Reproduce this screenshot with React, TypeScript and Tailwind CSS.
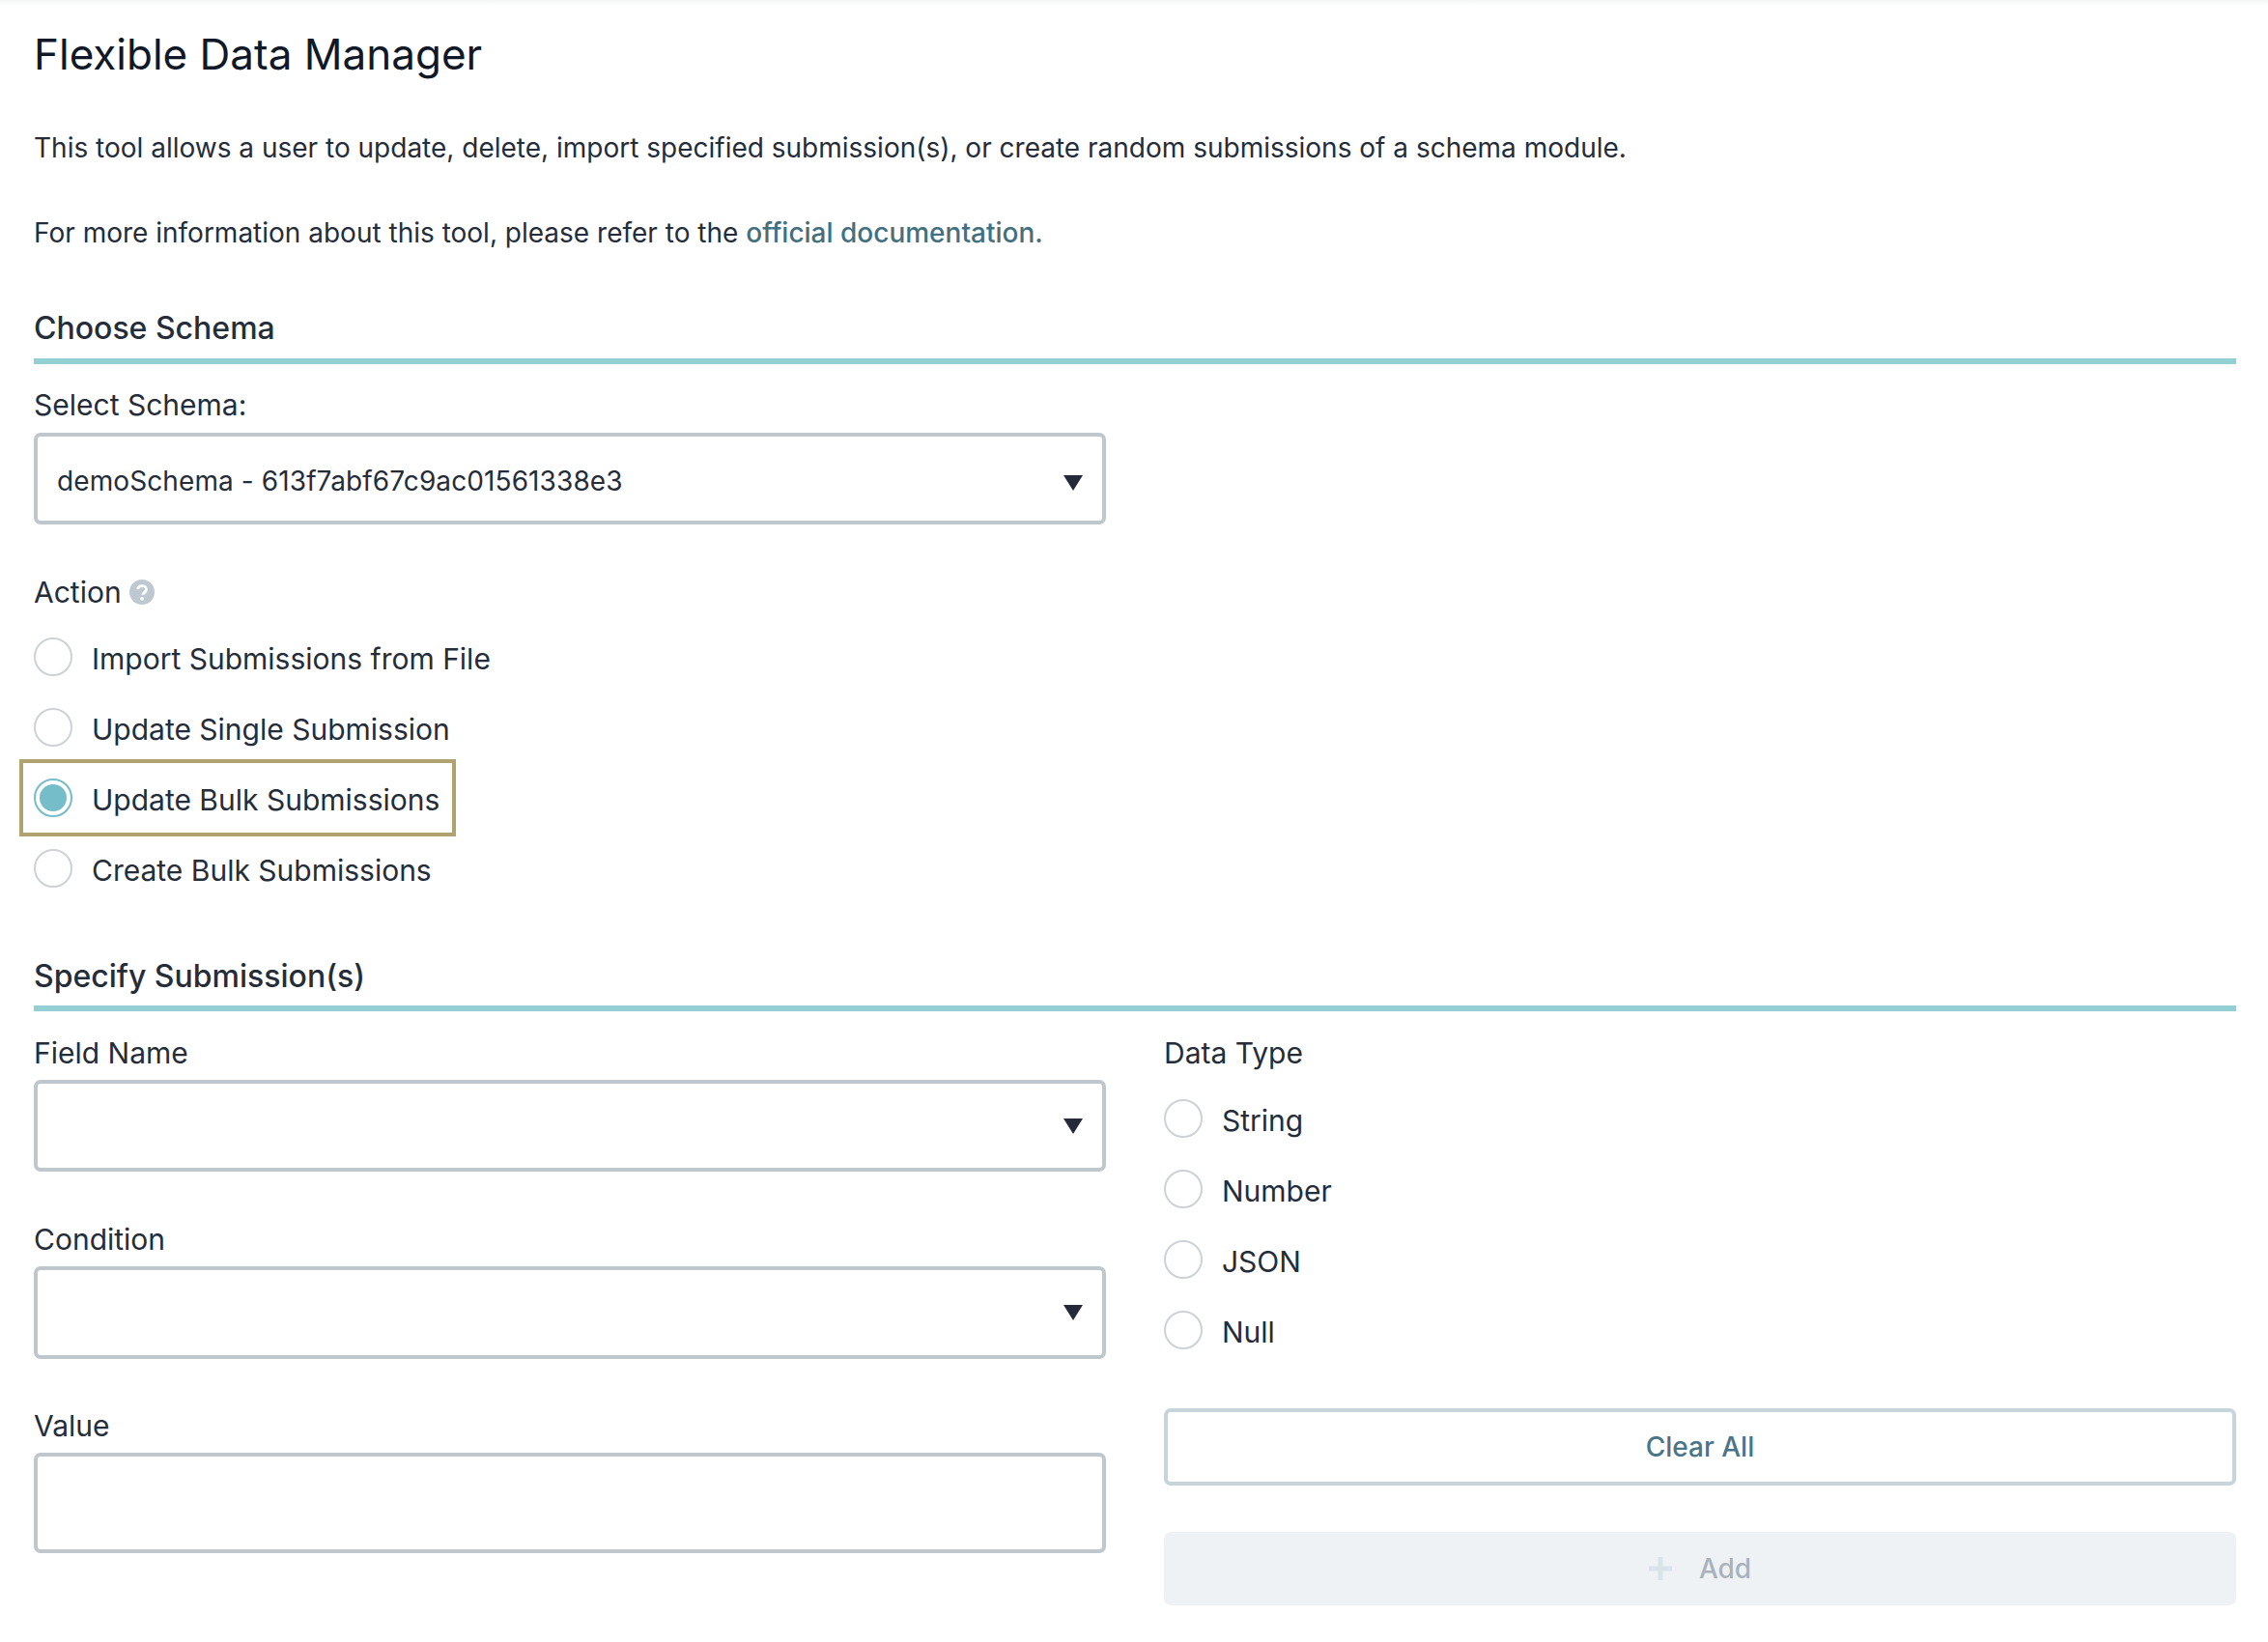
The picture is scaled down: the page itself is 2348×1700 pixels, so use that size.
const font = "[font-family:Inter,'Liberation_Sans',sans-serif]";

function Radio({ label, checked = false }: { label: string; checked?: boolean }) {
  return (
    <div className="relative flex w-fit items-center gap-5">
      {checked ? (
        <span className="flex h-10 w-10 items-center justify-center rounded-full border-[2px] border-[#74bdc9] bg-white">
          <span className="h-7 w-7 rounded-full bg-[#74bdc9]" />
        </span>
      ) : (
        <span className="h-10 w-10 rounded-full border-[2px] border-[#cdd2d6] bg-white" />
      )}
      <span className="h-10 pt-[2px] text-[30px] leading-10 text-[#252d3a]">{label}</span>
      {checked && (
        <span className="absolute -top-5 -right-[17px] -bottom-5 -left-[15px] border-4 border-[#b0a36f]" />
      )}
    </div>
  );
}

function Arrow({ cls }: { cls: string }) {
  return (
    <svg width="20" height="16" viewBox="0 0 20 16" className={`absolute right-[20px] ${cls}`}>
      <path d="M0 0H20L10 16Z" fill="#252a3a" />
    </svg>
  );
}

function SelectBox({ value, cls, arrowCls }: { value?: string; cls: string; arrowCls: string }) {
  return (
    <div className={`relative flex items-center rounded-[7px] border-[4px] border-[#bfc7cc] bg-white pt-[4px] pl-5 text-[28px] tracking-[0.1px] text-[#252d3a] ${cls}`}>
      {value}
      <Arrow cls={arrowCls} />
    </div>
  );
}

function Heading({ children, cls }: { children: string; cls: string }) {
  return (
    <h2 className={`border-b-[6px] border-[#93d0d4] text-[32px] leading-10 font-medium text-[#252d3a] ${cls}`}>{children}</h2>
  );
}

export default function App() {
  return (
    <div className={`min-h-[1700px] bg-white pr-[33px] pl-[35px] ${font} relative`}>
      <div className="absolute inset-x-0 top-0 h-[6px] bg-gradient-to-b from-[#f4f5f6] to-white" />
      <h1 className="pt-[32px] text-[44px] leading-[48px] font-normal text-[#111827]">Flexible Data Manager</h1>
      <p className="mt-[53px] text-[28px] leading-10 text-[#252d3a]">
        This tool allows a user to update, delete, import specified submission(s), or create random submissions of a schema module.
      </p>
      <p className="mt-12 text-[28px] leading-10 text-[#252d3a]">
        For more information about this tool, please refer to the{" "}
        <a className="font-medium text-[#42707f]">official documentation.</a>
      </p>

      <Heading cls="mt-[59px] pb-[11px]">Choose Schema</Heading>
      <div className="mt-[22px] text-[30px] leading-10 text-[#252d3a]">Select Schema:</div>
      <SelectBox value="demoSchema - 613f7abf67c9ac01561338e3" cls="mt-[9px] h-[95px] w-[1110px]" arrowCls="top-10" />

      <div className="mt-[50px] flex items-center gap-2 text-[30px] leading-10 text-[#252d3a]">
        Action
        <svg width="26" height="26" viewBox="0 0 26 26">
          <circle cx="13" cy="13" r="13" fill="#bdc8d1" />
          <path d="M8.6 10.2c.3-2.4 2.2-3.6 4.5-3.6 2.5 0 4.4 1.4 4.4 3.6 0 1.6-.9 2.5-2.1 3.3-1 .7-1.4 1.1-1.4 2.2" fill="none" stroke="#fff" strokeWidth="2.8" />
          <circle cx="13" cy="19.8" r="1.9" fill="#fff" />
        </svg>
      </div>
      <div className="mt-[27px] flex flex-col gap-[33px]">
        <Radio label="Import Submissions from File" />
        <Radio label="Update Single Submission" />
        <Radio label="Update Bulk Submissions" checked />
        <Radio label="Create Bulk Submissions" />
      </div>

      <Heading cls="mt-[72px] pb-[10px]">Specify Submission(s)</Heading>
      <div className="mt-[23px] grid grid-cols-2 gap-x-[60px]">
        <div className="flex flex-col">
          <div className="text-[30px] leading-10 text-[#252d3a]">Field Name</div>
          <SelectBox cls="mt-2 h-[95px]" arrowCls="top-[36px]" />
          <div className="mt-[50px] text-[30px] leading-10 text-[#252d3a]">Condition</div>
          <SelectBox cls="mt-2 h-[96px]" arrowCls="top-[36px]" />
          <div className="mt-[49px] text-[30px] leading-10 text-[#252d3a]">Value</div>
          <div className="mt-2 h-[104px] rounded-[7px] border-[4px] border-[#bfc7cc] bg-white" />
        </div>
        <div className="flex flex-col">
          <div className="text-[30px] leading-10 text-[#252d3a]">Data Type</div>
          <div className="mt-7 flex flex-col gap-[33px]">
            <Radio label="String" />
            <Radio label="Number" />
            <Radio label="JSON" />
            <Radio label="Null" />
          </div>
          <button className="mt-[61px] h-20 rounded-[7px] border-[4px] border-[#c5d5da] bg-white text-[28px] font-medium text-[#49748a]">Clear All</button>
          <button className="mt-12 flex h-[76px] items-center justify-center gap-[28px] rounded-[7px] bg-[#eef2f5] text-[28px] font-medium text-[#a9b2bd]">
            <svg width="24" height="24" viewBox="0 0 24 24">
              <path d="M12 0V24M0 12H24" stroke="#d8e4e9" strokeWidth="5" />
            </svg>
            Add
          </button>
        </div>
      </div>
    </div>
  );
}
